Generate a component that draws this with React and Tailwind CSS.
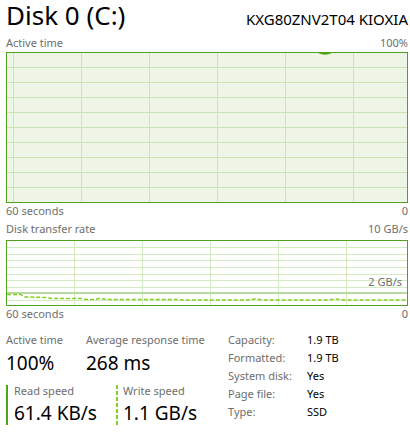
const hLinesActive = [14, 29, 44, 59, 74, 89, 104, 119, 134];
const vLinesActive = [6, 74, 142, 210, 278, 346];
const hLinesRate = [6, 13, 19, 26, 33, 39, 46, 59];
const vLinesRate = [67, 135, 203, 271, 339];

const writePath =
  'M0,53.5 L14,53.5 L18,56 L41,56.5 L44,57.5 L75,57.5 L79,58.5 L88,58.5 L92,57.5 L100,58.5 L170,58.5 L176,59 L240,59 L248,58 L256,59 L320,59 L328,58 L336,59 L400,59';

const ActiveChart = () => (
  <div className="h-[151px] border border-[#4ea41d] bg-[#eef5e7]">
    <svg width="400" height="149" className="block">
      {hLinesActive.map((y) => (
        <line key={y} x1="0" x2="400" y1={y + 0.5} y2={y + 0.5} stroke="#c9e3b4" strokeWidth="1" />
      ))}
      {vLinesActive.map((x) => (
        <line key={x} x1={x + 0.5} x2={x + 0.5} y1="0" y2="149" stroke="#c9e3b4" strokeWidth="1" />
      ))}
      <path d="M311,0 Q318,3.5 325,0 Z" fill="#4ea41d" />
    </svg>
  </div>
);

const RateChart = () => (
  <div className="relative h-[66px] border border-[#4ea41d] bg-white">
    <svg width="400" height="64" className="block">
      {hLinesRate.map((y) => (
        <line key={y} x1="0" x2="400" y1={y + 0.5} y2={y + 0.5} stroke="#d3ebc3" strokeWidth="1" />
      ))}
      {vLinesRate.map((x) => (
        <line key={x} x1={x + 0.5} x2={x + 0.5} y1="0" y2="64" stroke="#d3ebc3" strokeWidth="1" />
      ))}
      <line x1="0" x2="400" y1="52" y2="52" stroke="#b9d9a3" strokeWidth="2" />
      <path d={writePath} fill="none" stroke="#83d11f" strokeWidth="1.5" strokeDasharray="4 2" />
    </svg>
    <span className="absolute right-[5px] top-[33px] text-[11px] leading-[16px] text-[#6e6e6e]">2 GB/s</span>
  </div>
);

const AxisRow = ({ left, right, className = '' }) => (
  <div className={`flex justify-between text-[11px] leading-[16px] text-[#6e6e6e] ${className}`}>
    <span>{left}</span>
    <span>{right}</span>
  </div>
);

const props = [
  ['Capacity:', '1.9 TB'],
  ['Formatted:', '1.9 TB'],
  ['System disk:', 'Yes'],
  ['Page file:', 'Yes'],
  ['Type:', 'SSD'],
];

export default function App() {
  return (
    <div className="w-[410px] h-[445px] bg-white pl-[6px] pr-[2px] font-['Noto_Sans',sans-serif] text-black">
      {/* Header */}
      <div className="flex items-baseline justify-between">
        <h1 className="text-[26px] leading-[30px] font-normal">Disk 0 (C:)</h1>
        <span className="text-[15px] leading-[20px]">KXG80ZNV2T04 KIOXIA</span>
      </div>

      <AxisRow left="Active time" right="100%" className="mt-[5px]" />
      <div className="mt-[1px]">
        <ActiveChart />
      </div>
      <AxisRow left="60 seconds" right="0" />

      <AxisRow left="Disk transfer rate" right="10 GB/s" className="mt-[2px]" />
      <div className="mt-[3px]">
        <RateChart />
      </div>
      <AxisRow left="60 seconds" right="0" />

      {/* Stats */}
      <div className="mt-[9px] flex">
        <div className="w-[222px] pt-[1px]">
          <div className="flex">
            <div className="w-[80px]">
              <div className="text-[11px] leading-[16px] text-[#6e6e6e]">Active time</div>
              <div className="mt-[3px] text-[19px] leading-[24px]">100%</div>
            </div>
            <div>
              <div className="text-[11px] leading-[16px] text-[#6e6e6e]">Average response time</div>
              <div className="mt-[3px] text-[19px] leading-[24px]">268 ms</div>
            </div>
          </div>
          <div className="mt-[10px] flex">
            <div className="w-[110px] border-l-2 border-[#4ea41d] pl-[6px]">
              <div className="text-[11px] leading-[12px] text-[#6e6e6e]">Read speed</div>
              <div className="mt-[4px] text-[19px] leading-[24px]">61.4 KB/s</div>
            </div>
            <div className="flex">
              <div className="w-[2px] bg-[repeating-linear-gradient(to_bottom,#83d11f_0_4px,transparent_4px_6px)]" />
              <div className="pl-[5px]">
                <div className="text-[11px] leading-[12px] text-[#6e6e6e]">Write speed</div>
                <div className="mt-[4px] text-[19px] leading-[24px]">1.1 GB/s</div>
              </div>
            </div>
          </div>
        </div>
        <div className="text-[11px] leading-[18px]">
          {props.map(([k, v]) => (
            <div key={k} className="flex">
              <span className="w-[79px] text-[#6e6e6e]">{k}</span>
              <span>{v}</span>
            </div>
          ))}
        </div>
      </div>
    </div>
  );
}
